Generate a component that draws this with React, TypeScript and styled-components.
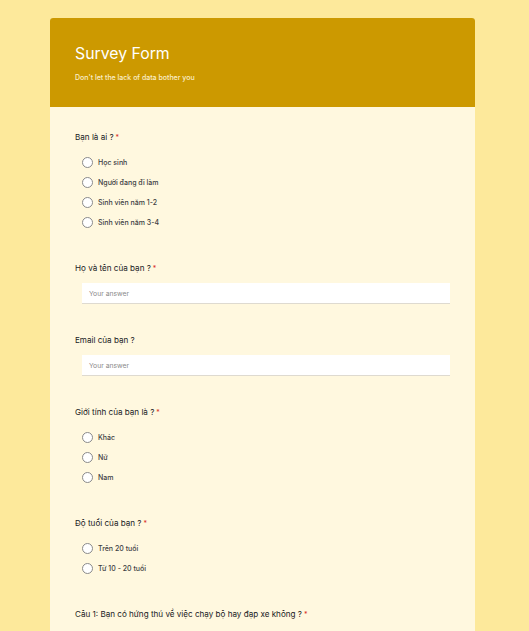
import React from "react";
import styled, { createGlobalStyle } from "styled-components";

const Global = createGlobalStyle`
  html, body { margin: 0; padding: 0; }
  body {
    background: #fde99b;
    font-family: Inter, "Noto Sans", sans-serif;
    color: #202124;
  }
`;

const Page = styled.div`
  min-height: 631px;
  padding: 18px 0 0 50px;
  box-sizing: border-box;
`;

const Card = styled.div`
  width: 425px;
  background: #fff8df;
  border-radius: 3px 3px 0 0;
  overflow: hidden;
`;

const Header = styled.header`
  background: #cc9900;
  height: 89px;
  box-sizing: border-box;
  padding: 26px 25px 0;
  color: #fff;
`;

const Title = styled.h1`
  margin: 0;
  font-size: 15.8px;
  font-weight: 400;
  line-height: 20px;
`;

const Subtitle = styled.p`
  margin: 9px 0 0;
  font-size: 7px;
  font-weight: 500;
  line-height: 10px;
  color: #fbeecb;
`;

const Body = styled.div`
  padding: 24px 25px 0;
`;

const Question = styled.section`
  margin-bottom: 30px;
`;

const Label = styled.div`
  font-size: 8.1px;
  line-height: 12px;
  height: 12px;
  color: #202124;
`;

const Star = styled.span`
  color: #d93025;
  margin-left: 2px;
  font-size: 7px;
  line-height: 0;
`;

const Options = styled.div`
  margin-top: 9px;
  padding-left: 7px;
  display: flex;
  flex-direction: column;
`;

const Option = styled.label`
  display: flex;
  align-items: center;
  height: 20px;
  font-size: 7px;
  font-weight: 500;
  color: #3c4043;
`;

const Radio = styled.span`
  width: 9px;
  height: 9px;
  border: 1px solid #8a8a8a;
  border-radius: 50%;
  background: #fff;
  margin-right: 5px;
  flex: none;
`;

const Input = styled.div`
  margin: 9px 0 0 7px;
  height: 20px;
  background: #fff;
  border-bottom: 1px solid #dedad0;
  display: flex;
  align-items: center;
  padding-left: 7px;
  font-size: 6.8px;
  color: #8a8a8a;
`;

type Q =
  | { label: string; required?: boolean; options: string[] }
  | { label: string; required?: boolean; input: true };

const questions: Q[] = [
  { label: "Bạn là ai ?", required: true, options: ["Học sinh", "Người đang đi làm", "Sinh viên năm 1-2", "Sinh viên năm 3-4"] },
  { label: "Họ và tên của bạn ?", required: true, input: true },
  { label: "Email của bạn ?", input: true },
  { label: "Giới tính của bạn là ?", required: true, options: ["Khác", "Nữ", "Nam"] },
  { label: "Độ tuổi của bạn ?", required: true, options: ["Trên 20 tuổi", "Từ 10 - 20 tuổi"] },
  { label: "Câu 1: Bạn có hứng thú về việc chạy bộ hay đạp xe không ?", required: true, options: [] },
];

export default function App() {
  return (
    <>
      <Global />
      <Page>
        <Card>
          <Header>
            <Title>Survey Form</Title>
            <Subtitle>Don't let the lack of data bother you</Subtitle>
          </Header>
          <Body>
            {questions.map((q, i) => (
              <Question key={i}>
                <Label>
                  {q.label}
                  {q.required && <Star>*</Star>}
                </Label>
                {"input" in q ? (
                  <Input>Your answer</Input>
                ) : q.options.length > 0 ? (
                  <Options>
                    {q.options.map((o) => (
                      <Option key={o}>
                        <Radio />
                        {o}
                      </Option>
                    ))}
                  </Options>
                ) : null}
              </Question>
            ))}
          </Body>
        </Card>
      </Page>
    </>
  );
}
